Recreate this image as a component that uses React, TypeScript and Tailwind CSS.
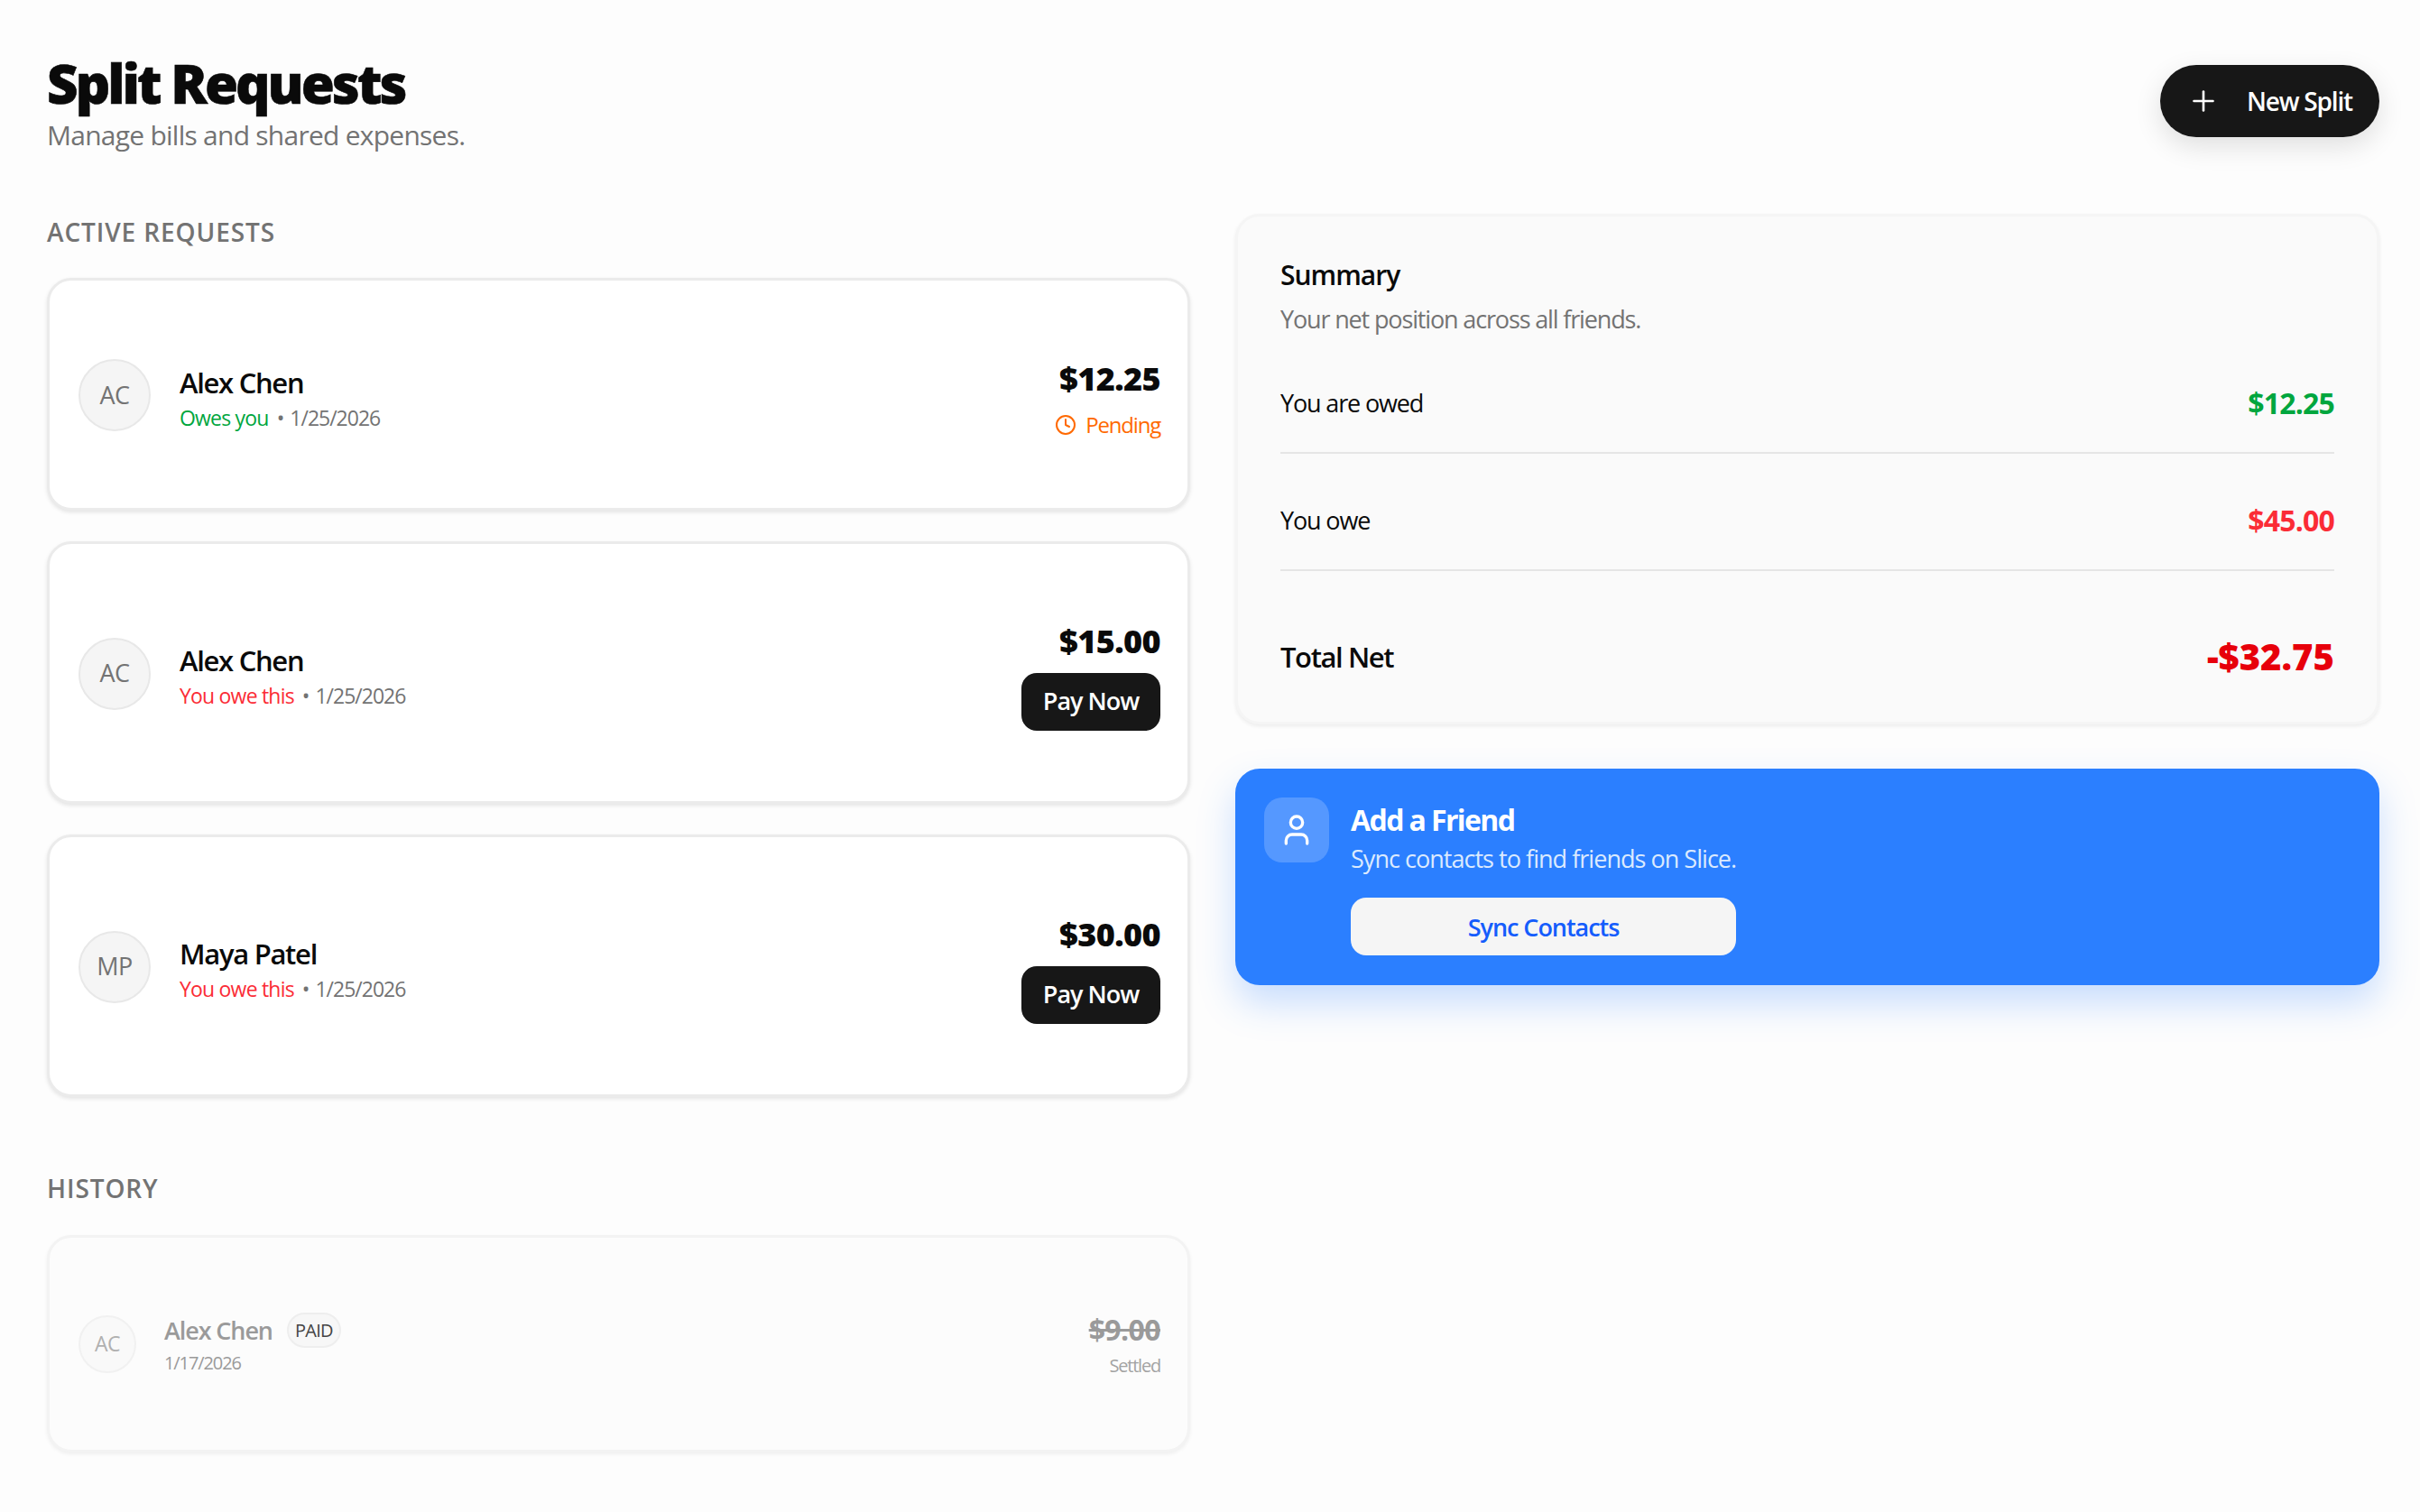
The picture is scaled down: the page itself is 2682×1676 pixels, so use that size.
import { Clock, Plus, User } from 'lucide-react'

const active = [
  { initials: 'AC', name: 'Alex Chen', note: 'Owes you', noteColor: 'text-[#00a63e]', date: '1/25/2026', amount: '$12.25', pending: true },
  { initials: 'AC', name: 'Alex Chen', note: 'You owe this', noteColor: 'text-[#fb2c36]', date: '1/25/2026', amount: '$15.00', pending: false },
  { initials: 'MP', name: 'Maya Patel', note: 'You owe this', noteColor: 'text-[#fb2c36]', date: '1/25/2026', amount: '$30.00', pending: false },
]

function RequestCard({ item }: { item: (typeof active)[number] }) {
  return (
    <div
      className={`flex items-center justify-between rounded-[27px] border-[3px] border-[#ebebeb] bg-white pr-[30px] pl-[32px] shadow-[0_2px_4px_rgba(0,0,0,0.1)] ${
        item.pending ? 'h-[258px]' : 'h-[291px]'
      }`}
    >
      <div className="flex items-center gap-[32px]">
        <div className="mt-[2px] flex h-[80px] w-[80px] items-center justify-center rounded-full border-2 border-[#e8e8e8] bg-[#f5f5f5] text-[27px] tracking-[-0.5px] text-[#737373]">
          {item.initials}
        </div>
        <div className={item.pending ? 'pt-[8px]' : 'pt-[6px]'}>
          <div className="text-[31px] leading-[44px] font-[550] tracking-[-1.3px] text-[#0a0a0a]">{item.name}</div>
          <div className="flex items-center text-[23px] leading-[34px] text-[#737373]">
            <span className={`font-medium tracking-[-0.8px] ${item.noteColor}`}>{item.note}</span>
            <span className="mr-[6px] ml-[9px]">•</span>
            <span className="tracking-[-1px]">{item.date}</span>
          </div>
        </div>
      </div>
      <div className={`flex flex-col items-end ${item.pending ? 'pt-[10px]' : 'pt-[5px]'}`}>
        <div className="text-[36px] leading-[48px] font-extrabold tracking-[-0.6px] text-[#0a0a0a]">{item.amount}</div>
        {item.pending ? (
          <div className="mt-[10px] flex items-center gap-[10px] text-[24px] leading-[34px] font-medium tracking-[-1.2px] text-[#ff6900]">
            <Clock className="h-[24px] w-[24px]" strokeWidth={2} />
            Pending
          </div>
        ) : (
          <button className="mt-[11px] flex h-[64px] w-[154px] items-center justify-center rounded-[17px] bg-[#171717] text-[27px] font-[550] tracking-[-1px] text-white">
            Pay Now
          </button>
        )}
      </div>
    </div>
  )
}

function SummaryRow({ label, value, color }: { label: string; value: string; color: string }) {
  return (
    <div className="flex items-center justify-between border-b-2 border-[#e5e5e5] pt-[56px] pb-[36px] leading-[36px]">
      <span className="text-[27px] tracking-[-1.15px] text-[#0a0a0a]">{label}</span>
      <span className={`text-[32px] font-bold tracking-[-0.8px] ${color}`}>{value}</span>
    </div>
  )
}

export default function App() {
  return (
    <div className="min-h-[1676px] bg-[#fdfdfd] pt-[56px] pr-[45px] pl-[52px] font-['Open_Sans',sans-serif]">
      {/* Header */}
      <header className="flex items-start justify-between">
        <div>
          <h1 className="text-[60px] leading-[72px] font-extrabold tracking-[-3px] text-[#0a0a0a] [-webkit-text-stroke:0.6px_#0a0a0a]">Split Requests</h1>
          <p className="mt-[2px] text-[30px] leading-[40px] tracking-[-0.75px] text-[#737373]">Manage bills and shared expenses.</p>
        </div>
        <button className="mt-[16px] flex h-[80px] w-[243px] items-center gap-[30px] rounded-full bg-[#171717] pl-[30px] text-[28px] font-semibold tracking-[-1.2px] text-white shadow-[0_10px_30px_rgba(0,0,0,0.12)]">
          <Plus className="h-[36px] w-[36px]" strokeWidth={1.75} />
          New Split
        </button>
      </header>

      <div className="mt-[67px] grid grid-cols-[1267px_1fr] gap-[50px]">
        {/* Left column */}
        <div>
          <h2 className="text-[28px] leading-[40px] font-semibold tracking-[0.9px] text-[#737373]">ACTIVE REQUESTS</h2>
          <div className="mt-[31px] flex flex-col gap-[34px]">
            {active.map((item, i) => (
              <RequestCard key={i} item={item} />
            ))}
          </div>

          <h2 className="mt-[81px] text-[28px] leading-[40px] font-semibold tracking-[0.9px] text-[#737373]">HISTORY</h2>
          <div className="mt-[32px] flex h-[241px] items-center justify-between rounded-[27px] border-[3px] border-[#f3f3f3] bg-[#fcfcfc] pr-[30px] pl-[32px] shadow-[0_2px_4px_rgba(0,0,0,0.06)]">
            <div className="flex items-center gap-[31px]">
              <div className="flex h-[64px] w-[64px] items-center justify-center rounded-full border-2 border-[#f1f1f1] bg-[#f9f9f9] text-[23px] tracking-[-0.5px] text-[#b0b0b0]">
                AC
              </div>
              <div>
                <div className="flex items-center gap-[16px]">
                  <span className="text-[27px] leading-[40px] font-[550] tracking-[-1.1px] text-[#9a9a9a]">Alex Chen</span>
                  <span className="flex h-[39px] w-[60px] items-center justify-center rounded-full border-2 border-[#eeeeee] bg-[#f7f7f7] text-[20px] font-medium tracking-[-0.8px] text-[#444444]">
                    PAID
                  </span>
                </div>
                <div className="mt-[2px] text-[20px] leading-[28px] tracking-[-1.1px] text-[#9a9a9a]">1/17/2026</div>
              </div>
            </div>
            <div className="flex flex-col items-end">
              <div className="text-[32px] leading-[44px] font-bold tracking-[-0.6px] text-[#9a9a9a] line-through">$9.00</div>
              <div className="mt-[4px] text-[20px] leading-[28px] tracking-[-1.2px] text-[#a3a3a3]">Settled</div>
            </div>
          </div>
        </div>

        {/* Right column */}
        <div className="flex flex-col gap-[49px]">
          <section className="h-[566px] rounded-[27px] border-[3px] border-[#f5f5f5] bg-[#fafafa] px-[47px] pt-[43px] shadow-[0_2px_4px_rgba(0,0,0,0.07)]">
            <h3 className="text-[30px] leading-[44px] font-semibold tracking-[-1px] text-[#0a0a0a]">Summary</h3>
            <p className="mt-[8px] text-[27px] leading-[38px] tracking-[-1.15px] text-[#737373]">Your net position across all friends.</p>
            <SummaryRow label="You are owed" value="$12.25" color="text-[#00a63e]" />
            <SummaryRow label="You owe" value="$45.00" color="text-[#fb2c36]" />
            <div className="flex items-center justify-between pt-[72px] leading-[46px]">
              <span className="text-[31px] font-semibold tracking-[-1.4px] text-[#0a0a0a]">Total Net</span>
              <span className="text-[40px] font-extrabold text-[#e7000b]">-$32.75</span>
            </div>
          </section>

          <section className="flex h-[240px] gap-[24px] rounded-[27px] bg-[#2b7fff] p-[32px] shadow-[0_20px_40px_rgba(43,127,255,0.25)]">
            <div className="flex h-[72px] w-[72px] items-center justify-center rounded-[20px] bg-[#ffffff]/20">
              <User className="h-[40px] w-[40px] text-white" strokeWidth={2} />
            </div>
            <div className="pt-[3px]">
              <h3 className="text-[32px] leading-[44px] font-bold tracking-[-1.6px] text-white">Add a Friend</h3>
              <p className="mt-[2px] text-[27px] leading-[38px] tracking-[-0.97px] text-[#dbeafe]">Sync contacts to find friends on Slice.</p>
              <button className="mt-[24px] h-[64px] w-[427px] rounded-[17px] bg-[#f5f5f5] pt-[2px] text-[27px] font-[550] tracking-[-1.05px] text-[#155dfc]">
                Sync Contacts
              </button>
            </div>
          </section>
        </div>
      </div>
    </div>
  )
}
